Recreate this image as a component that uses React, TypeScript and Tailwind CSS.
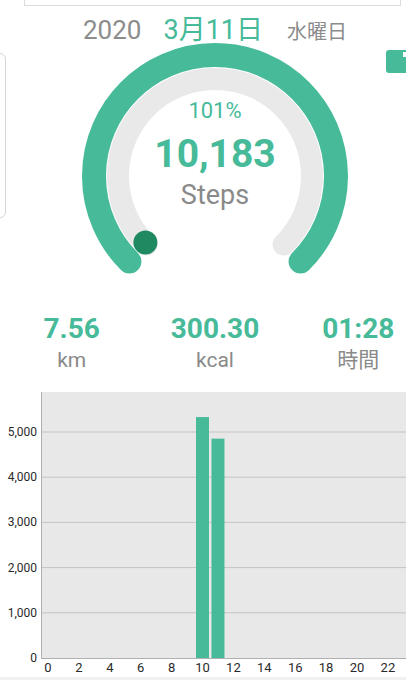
import React from "react";

const GREEN = "#46ba99";
const DOT = "#1f8a62";

const HOURS: Record<number, number> = { 10: 5330, 11: 4853 };

// gauge geometry (svg coords)
const CX = 215;
const CY = 136;

function arc(r: number) {
  const d = r * Math.SQRT1_2;
  return `M ${CX - d} ${CY + d} A ${r} ${r} 0 1 1 ${CX + d} ${CY + d}`;
}

function Gauge() {
  const dot = 97 * Math.SQRT1_2;
  return (
    <div className="relative h-[250px] w-[430px]">
      <svg width="430" height="250" className="block">
        <path d={arc(97)} fill="none" stroke="#e9e9e9" strokeWidth="22" strokeLinecap="round" />
        <path d={arc(121)} fill="none" stroke={GREEN} strokeWidth="24" strokeLinecap="round" />
        <circle cx={CX - dot - 1} cy={CY + dot - 2} r="12" fill={DOT} />
      </svg>
      <div className="absolute inset-x-0 top-[57px] flex flex-col items-center">
        <span className="text-[22px] leading-[28px] text-[#46ba99]">101%</span>
        <span className="mt-[7px] text-[39px] font-bold leading-[44px] text-[#46ba99]">10,183</span>
        <span className="mt-[1px] text-[27px] leading-[36px] text-[#8a8a8a]">Steps</span>
      </div>
    </div>
  );
}

function Stat({ value, label }: { value: string; label: string }) {
  return (
    <div className="flex flex-col items-center">
      <span className="text-[28px] font-bold leading-[32px] text-[#46ba99]">{value}</span>
      <span className="mt-[0px] text-[21px] leading-[30px] text-[#8a8a8a]">{label}</span>
    </div>
  );
}

function Chart() {
  const left = 41;
  const top = 7;
  const bottom = 273;
  const per = 45.2 / 1000;
  const slot = 15.45;
  const ticks = [0, 1000, 2000, 3000, 4000, 5000];
  return (
    <svg width="406" height="295" className="block" style={{ fontFamily: "Roboto, sans-serif" }}>
      <rect x={left} y={top} width={406 - left} height={bottom - top} fill="#e8e8e8" />
      {ticks.slice(1).map((t) => (
        <line key={t} x1={left} x2={406} y1={bottom - t * per} y2={bottom - t * per} stroke="#c4c4c4" strokeWidth="1" />
      ))}
      {ticks.map((t) => (
        <text key={t} x={37} y={bottom - t * per + 4} textAnchor="end" fontSize="12" fill="#2a2a2a">
          {t.toLocaleString("en-US")}
        </text>
      ))}
      {Object.entries(HOURS).map(([h, v]) => {
        const cx = 48 + slot * Number(h);
        return <rect key={h} x={cx - 6.5} y={bottom - v * per} width="13" height={v * per} fill={GREEN} />;
      })}
      <line x1={left + 0.5} x2={left + 0.5} y1={top} y2={bottom} stroke="#b0b0b0" />
      <line x1={left} x2={406} y1={bottom + 0.5} y2={bottom + 0.5} stroke="#b0b0b0" />
      {Array.from({ length: 12 }, (_, i) => i * 2).map((h) => (
        <text key={h} x={48 + slot * h} y={287} textAnchor="middle" fontSize="13" fill="#2a2a2a">
          {h}
        </text>
      ))}
      <rect x="0" y="292" width="406" height="3" fill="#f1f1f1" />
    </svg>
  );
}

export default function App() {
  return (
    <div
      className="relative h-[680px] w-[406px] overflow-hidden bg-white"
      style={{ fontFamily: "Roboto, 'Noto Sans CJK JP', sans-serif" }}
    >
      {/* cut-off top field */}
      <div className="ml-[24px] h-[6px] w-[377px] border-x border-b border-[#dcdcdc]" />

      <div className="w-[430px]">
        {/* date */}
        <div className="flex h-[34px] items-baseline justify-center pt-[8px]">
          <span className="text-[26px] leading-[32px] text-[#8c8c8c]">2020</span>
          <span className="ml-[22px] text-[27px] leading-[32px] text-[#46ba99]">3月11日</span>
          <span className="ml-[24px] text-[20px] leading-[32px] text-[#8c8c8c]">水曜日</span>
        </div>

        <Gauge />

        {/* stats */}
        <div className="grid h-[95px] grid-cols-3 pt-[23px]">
          <Stat value="7.56" label="km" />
          <Stat value="300.30" label="kcal" />
          <Stat value="01:28" label="時間" />
        </div>
      </div>

      <Chart />

      {/* side widgets partly off screen */}
      <div className="absolute left-[-20px] top-[53px] h-[165px] w-[26px] rounded-[6px] border border-[#d6d6d6] bg-white" />
      <div className="absolute left-[386px] top-[50px] h-[23px] w-[30px] rounded-[3px] bg-[#46ba99]">
        <div className="ml-[17px] mt-[2px] h-[5px] w-[3px] bg-white" />
      </div>
    </div>
  );
}
